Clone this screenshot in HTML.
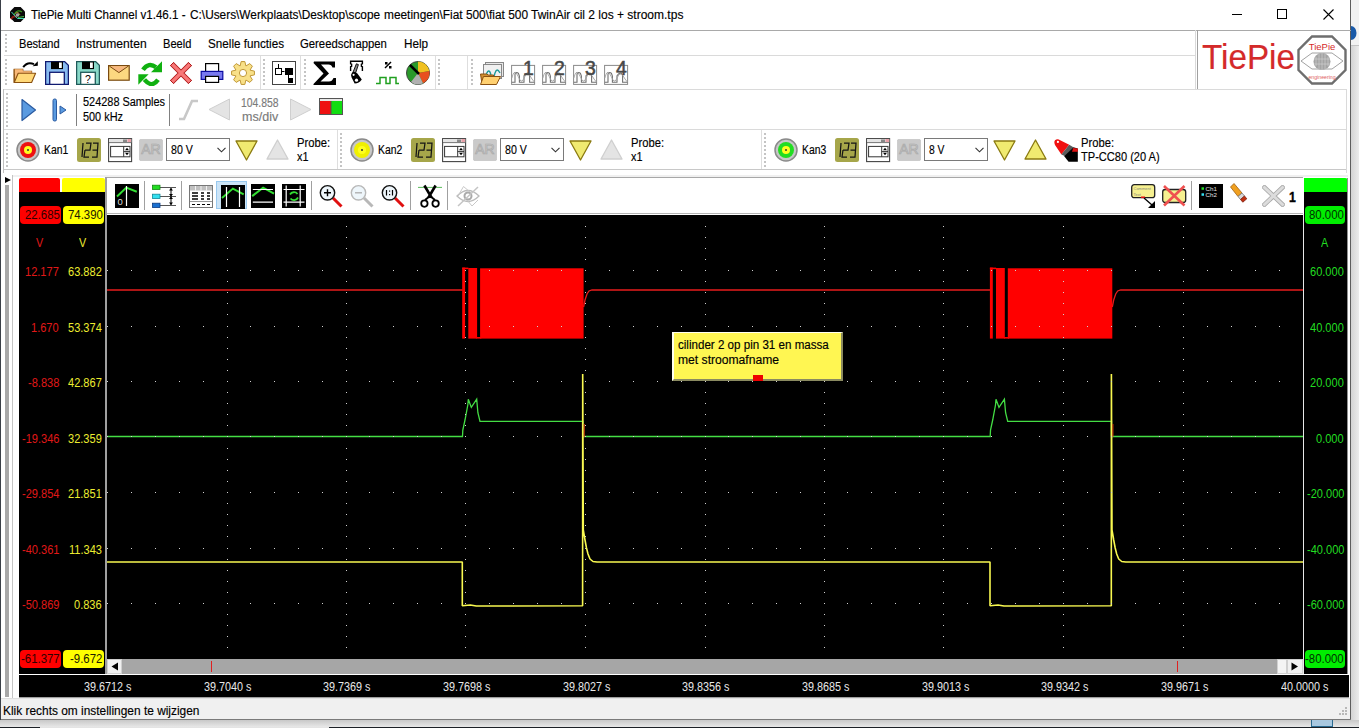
<!DOCTYPE html><html><head><meta charset="utf-8"><style>
html,body{margin:0;padding:0;}
body{width:1359px;height:728px;position:relative;overflow:hidden;background:#e6e6e6;font-family:"Liberation Sans",sans-serif;}
.t{position:absolute;white-space:nowrap;line-height:1;-webkit-text-stroke:0.15px currentColor;}
.r{position:absolute;display:block;}
</style></head><body>
<div class="r" style="left:0px;top:0px;width:1351px;height:720px;background:#ffffff;"></div>
<div class="r" style="left:1351px;top:0px;width:8px;height:728px;background:linear-gradient(90deg,#d4d4d4,#ececec);"></div>
<div class="r" style="left:1351px;top:0px;width:8px;height:45px;background:#f2f2f2;"></div>
<div class="r" style="left:1351px;top:45px;width:8px;height:1px;background:#c4c4c4;"></div>
<div class="r" style="left:0px;top:720px;width:1359px;height:8px;background:linear-gradient(180deg,#c8c8c8,#ececec);"></div>
<div class="r" style="left:0px;top:727px;width:1359px;height:1px;background:#1c2026;"></div>
<div class="r" style="left:40px;top:727px;width:289px;height:1px;background:#e4e4e4;"></div>
<div class="r" style="left:1311px;top:719px;width:22px;height:8px;background:#a8c8e0;box-sizing:border-box;border:1px solid #2a6a90;border-top:0;"></div>
<div class="r" style="left:0px;top:0px;width:1px;height:720px;background:#3a3f47;"></div>
<div class="r" style="left:1350px;top:0px;width:1px;height:720px;background:#5e5e5e;"></div>
<svg class="r" style="left:9.5px;top:6.5px;" width="15" height="15" viewBox="0 0 15 15"><path d="M4.4 0h6.2l4.4 4.4v6.2l-4.4 4.4h-6.2l-4.4-4.4v-6.2z" fill="#0a0a0a"/><path d="M4 8Q7 1.5 12 5" stroke="#3a9a20" stroke-width="1.2" fill="none"/><path d="M5.5 6.5Q8 4 10 8" stroke="#c8a030" stroke-width="0.9" fill="none"/><path d="M1 12Q4 8 7 10" stroke="#8a1a10" stroke-width="2" fill="none"/><path d="M1.5 5L7.5 11.5L14 11.5" stroke="#40d8b8" stroke-width="1" fill="none"/><path d="M8 10.5L14 9.5" stroke="#40c040" stroke-width="1" fill="none"/><circle cx="7.5" cy="8" r="1.8" fill="#a0a0a0"/></svg>
<div class="r" style="left:1232px;top:14px;width:10px;height:1px;background:#000;"></div>
<svg class="r" style="left:1277px;top:9px;" width="10" height="10" viewBox="0 0 10 10"><rect x="0.5" y="0.5" width="9" height="9" fill="none" stroke="#000" stroke-width="1"/></svg>
<svg class="r" style="left:1323px;top:9px;" width="11" height="11" viewBox="0 0 11 11"><path d="M0.5 0.5L10.5 10.5M10.5 0.5L0.5 10.5" stroke="#000" stroke-width="1.1"/></svg>
<svg class="r" style="left:1351px;top:25px;" width="8" height="16" viewBox="0 0 8 16"><ellipse cx="0" cy="8" rx="5.5" ry="7" fill="#1a5aa8"/></svg>
<div class="t" style="left:30.50px;top:9.24px;font-size:12px;color:#000;transform:scaleX(0.9637);transform-origin:left top;">TiePie Multi Channel v1.46.1 -</div>
<div class="t" style="left:189.90px;top:9.24px;font-size:12px;color:#000;transform:scaleX(0.9873);transform-origin:left top;">C:\Users\Werkplaats\Desktop\scope</div>
<div class="t" style="left:384.00px;top:9.24px;font-size:12px;color:#000;transform:scaleX(0.9901);transform-origin:left top;">meetingen\Fiat 500\fiat 500</div>
<div class="t" style="left:531.00px;top:9.24px;font-size:12px;color:#000;">TwinAir cil 2 los + stroom.tps</div>
<div class="r" style="left:1px;top:30px;width:1350px;height:1px;background:#a9a9a9;"></div>
<div class="r" style="left:3px;top:89px;width:1px;height:84px;background:#c0c0c0;"></div>
<div class="r" style="left:4px;top:55px;width:1191px;height:1px;background:#dadada;"></div>
<div class="r" style="left:4px;top:89px;width:1342px;height:1px;background:#dadada;"></div>
<div class="r" style="left:4px;top:129px;width:1342px;height:1px;background:#dadada;"></div>
<div class="r" style="left:4px;top:169px;width:1342px;height:1px;background:#c8c8c8;"></div>
<div class="r" style="left:1195px;top:30px;width:1px;height:59px;background:#dadada;"></div>
<div class="r" style="left:1197px;top:30px;width:1px;height:59px;background:#a0a0a0;"></div>
<div class="r" style="left:1346px;top:89px;width:1px;height:84px;background:#dadada;"></div>
<svg class="r" style="left:0;top:0" width="1351" height="54"><path d="M5 34h2v2h-2zM5 38h2v2h-2zM5 42h2v2h-2zM5 46h2v2h-2zM5 50h2v2h-2z" fill="#c4c4c4"/></svg>
<svg class="r" style="left:0;top:0" width="1351" height="88"><path d="M5 59h2v2h-2zM5 63h2v2h-2zM5 67h2v2h-2zM5 71h2v2h-2zM5 75h2v2h-2zM5 79h2v2h-2zM5 83h2v2h-2z" fill="#c4c4c4"/></svg>
<svg class="r" style="left:0;top:0" width="1351" height="88"><path d="M263 59h2v2h-2zM263 63h2v2h-2zM263 67h2v2h-2zM263 71h2v2h-2zM263 75h2v2h-2zM263 79h2v2h-2zM263 83h2v2h-2z" fill="#c4c4c4"/></svg>
<svg class="r" style="left:0;top:0" width="1351" height="88"><path d="M304 59h2v2h-2zM304 63h2v2h-2zM304 67h2v2h-2zM304 71h2v2h-2zM304 75h2v2h-2zM304 79h2v2h-2zM304 83h2v2h-2z" fill="#c4c4c4"/></svg>
<svg class="r" style="left:0;top:0" width="1351" height="88"><path d="M438 59h2v2h-2zM438 63h2v2h-2zM438 67h2v2h-2zM438 71h2v2h-2zM438 75h2v2h-2zM438 79h2v2h-2zM438 83h2v2h-2z" fill="#c4c4c4"/></svg>
<svg class="r" style="left:0;top:0" width="1351" height="88"><path d="M471 59h2v2h-2zM471 63h2v2h-2zM471 67h2v2h-2zM471 71h2v2h-2zM471 75h2v2h-2zM471 79h2v2h-2zM471 83h2v2h-2z" fill="#c4c4c4"/></svg>
<div class="r" style="left:260px;top:56px;width:1px;height:33px;background:#dedede;"></div>
<div class="r" style="left:300px;top:56px;width:1px;height:33px;background:#dedede;"></div>
<div class="r" style="left:435px;top:56px;width:1px;height:33px;background:#dedede;"></div>
<div class="r" style="left:467px;top:56px;width:1px;height:33px;background:#dedede;"></div>
<svg class="r" style="left:0;top:0" width="1351" height="128"><path d="M6 93h2v2h-2zM6 97h2v2h-2zM6 101h2v2h-2zM6 105h2v2h-2zM6 109h2v2h-2zM6 113h2v2h-2zM6 117h2v2h-2zM6 121h2v2h-2zM6 125h2v2h-2z" fill="#c4c4c4"/></svg>
<svg class="r" style="left:0;top:0" width="1351" height="168"><path d="M6 133h2v2h-2zM6 137h2v2h-2zM6 141h2v2h-2zM6 145h2v2h-2zM6 149h2v2h-2zM6 153h2v2h-2zM6 157h2v2h-2zM6 161h2v2h-2zM6 165h2v2h-2z" fill="#c4c4c4"/></svg>
<svg class="r" style="left:0;top:0" width="1351" height="168"><path d="M340 133h2v2h-2zM340 137h2v2h-2zM340 141h2v2h-2zM340 145h2v2h-2zM340 149h2v2h-2zM340 153h2v2h-2zM340 157h2v2h-2zM340 161h2v2h-2zM340 165h2v2h-2z" fill="#c4c4c4"/></svg>
<svg class="r" style="left:0;top:0" width="1351" height="168"><path d="M764 133h2v2h-2zM764 137h2v2h-2zM764 141h2v2h-2zM764 145h2v2h-2zM764 149h2v2h-2zM764 153h2v2h-2zM764 157h2v2h-2zM764 161h2v2h-2zM764 165h2v2h-2z" fill="#c4c4c4"/></svg>
<div class="r" style="left:337px;top:130px;width:1px;height:39px;background:#dedede;"></div>
<div class="r" style="left:761px;top:130px;width:1px;height:39px;background:#dedede;"></div>
<div class="t" style="left:18.50px;top:37.64px;font-size:12px;color:#000;transform:scaleX(0.9242);transform-origin:left top;">Bestand</div>
<div class="t" style="left:76.00px;top:37.64px;font-size:12px;color:#000;transform:scaleX(1.0083);transform-origin:left top;">Instrumenten</div>
<div class="t" style="left:163.20px;top:37.64px;font-size:12px;color:#000;transform:scaleX(0.9245);transform-origin:left top;">Beeld</div>
<div class="t" style="left:208.00px;top:37.64px;font-size:12px;color:#000;transform:scaleX(0.9736);transform-origin:left top;">Snelle functies</div>
<div class="t" style="left:300.40px;top:37.64px;font-size:12px;color:#000;transform:scaleX(0.9435);transform-origin:left top;">Gereedschappen</div>
<div class="t" style="left:404.40px;top:37.64px;font-size:12px;color:#000;transform:scaleX(0.9773);transform-origin:left top;">Help</div>
<svg class="r" style="left:13px;top:60px;" width="26" height="24" viewBox="0 0 26 24"><path d="M10.2 7.2Q14.5 1.2 21 4.2" stroke="#000" stroke-width="2" fill="none"/><path d="M19.6 6.2L24.8 1.3V5.8z" fill="#000"/><path d="M1.2 22.5V9.2H9.8V11.2H18.6V13.2" fill="#f8b878" stroke="#8a5010" stroke-width="1.1"/><path d="M1.2 9.2H9.8V11.2H18.6V14H1.2z" fill="#f8b878"/><path d="M5.2 13.2H22.6L18.6 22.5H1.2z" fill="#ffd878" stroke="#8a5010" stroke-width="1.1" stroke-linejoin="round"/><path d="M1.2 9.2V22.5" stroke="#8a5010" stroke-width="1.1"/></svg>
<svg class="r" style="left:45px;top:61px;" width="24" height="24" viewBox="0 0 24 24"><path d="M0.6 0.6H19.6L23.4 4.4V23.4H0.6z" fill="#88bbf0" stroke="#101a70" stroke-width="1.3"/><rect x="6" y="0.6" width="12" height="7.5" fill="#000"/><rect x="14" y="1.5" width="2.8" height="5.5" fill="#fff"/><rect x="4.7" y="11.3" width="14.6" height="12.1" fill="#fff" stroke="#101a70" stroke-width="1.3"/></svg>
<svg class="r" style="left:76px;top:61px;" width="24" height="24" viewBox="0 0 24 24"><path d="M0.6 0.6H19.6L23.4 4.4V23.4H0.6z" fill="#88d8c8" stroke="#205a5a" stroke-width="1.3"/><rect x="6" y="0.6" width="12" height="7.5" fill="#000"/><rect x="14" y="1.5" width="2.8" height="5.5" fill="#fff"/><rect x="4.7" y="11.3" width="14.6" height="12.1" fill="#fff" stroke="#205a5a" stroke-width="1.3"/><text x="12" y="22" font-size="10.5" font-family="Liberation Sans" text-anchor="middle" fill="#000">?</text></svg>
<svg class="r" style="left:107px;top:64px;" width="24" height="18" viewBox="0 0 24 18"><rect x="1.6" y="1.6" width="20.6" height="14.6" fill="#fcd880" stroke="#7a4a10" stroke-width="1.2"/><path d="M2.8 2.2L12 8.4L21 2.2z" fill="#f8b880"/><path d="M2.5 2.2L11.9 8.6L21.2 2.2" fill="none" stroke="#7a4a10" stroke-width="1"/></svg>
<svg class="r" style="left:138px;top:60px;" width="25" height="26" viewBox="0 0 25 26"><path d="M5 9.8Q10.5 1.8 18 7.2" stroke="#10b010" stroke-width="4.4" fill="none"/><path d="M24 1.3V12.2H13z" fill="#10b010"/><path d="M20 19.8Q14 28.5 6.4 19.6" stroke="#10b010" stroke-width="4.4" fill="none"/><path d="M0.3 14.2V24.8L10.6 14.2z" fill="#10b010"/></svg>
<svg class="r" style="left:169px;top:61px;" width="24" height="24" viewBox="0 0 24 24"><path d="M3 3L21 21M21 3L3 21" stroke="#b01818" stroke-width="5.2" stroke-linecap="butt"/><path d="M3 3L21 21M21 3L3 21" stroke="#f87878" stroke-width="3.2" stroke-linecap="butt"/><path d="M1.2 4.8L4.8 1.2M19.2 1.2L22.8 4.8M1.2 19.2L4.8 22.8M19.2 22.8L22.8 19.2" stroke="#b01818" stroke-width="1"/></svg>
<svg class="r" style="left:200px;top:63px;" width="24" height="21" viewBox="0 0 24 21"><rect x="5.6" y="0.6" width="13" height="8" fill="#fff" stroke="#000" stroke-width="1.2"/><rect x="1.2" y="8.4" width="21.6" height="8" fill="#7878f0" stroke="#0a0aa0" stroke-width="1.2"/><rect x="5.6" y="13.4" width="13" height="6" fill="#fff" stroke="#000" stroke-width="1.2"/></svg>
<svg class="r" style="left:231px;top:61px;" width="24" height="24" viewBox="0 0 24 24"><path d="M10.15 0.55 L13.85 0.55 L14.91 4.98 L18.79 2.60 L21.40 5.21 L19.02 9.09 L23.45 10.15 L23.45 13.85 L19.02 14.91 L21.40 18.79 L18.79 21.40 L14.91 19.02 L13.85 23.45 L10.15 23.45 L9.09 19.02 L5.21 21.40 L2.60 18.79 L4.98 14.91 L0.55 13.85 L0.55 10.15 L4.98 9.09 L2.60 5.21 L5.21 2.60 L9.09 4.98z" fill="#f8e088" stroke="#c09838" stroke-width="1" stroke-linejoin="round"/><circle cx="12" cy="12" r="3.6" fill="#fff" stroke="#c09838" stroke-width="1"/></svg>
<svg class="r" style="left:272px;top:61px;" width="24" height="24" viewBox="0 0 24 24"><rect x="0.5" y="0.5" width="23" height="23" fill="#fff" stroke="#444"/><rect x="3.5" y="7.5" width="6" height="6" fill="#fff" stroke="#000"/><path d="M6.5 3v4M9.5 10.5h3" stroke="#000"/><rect x="13" y="7" width="8" height="7" fill="#000"/><path d="M16.5 14v4" stroke="#000"/><rect x="16" y="17" width="5" height="5" fill="#000"/></svg>
<svg class="r" style="left:313px;top:61px;" width="24" height="24" viewBox="0 0 24 24"><path d="M1 0.5h21v6h-2.5q-1-3-4-3h-7.5l8 9-8.5 8h8.5q3 0 4.5-3.5h2.5v7.5h-22.5v-1.5l10-10.5-10-10.5z" fill="#000"/></svg>
<svg class="r" style="left:349px;top:60px;" width="16" height="26" viewBox="0 0 16 26"><path d="M1.6 11V6.8L2.6 6.4V4.2L1.6 3.8V1.2H13.4V3.8L12.4 4.2V6.4L13.4 6.8V11" fill="none" stroke="#000" stroke-width="1.4"/><path d="M7.4 3.8L9.4 4.6L6.6 13L4 12.2z" fill="#888" stroke="#000" stroke-width="0.9"/><path d="M3.2 12.3Q1.2 15 2.6 17.6L5.6 23.6Q10.2 23.2 12.8 19.4L8.4 13.6Q6.2 11.2 3.2 12.3z" fill="#000"/><circle cx="4.6" cy="14.8" r="1.1" fill="#fff"/><circle cx="7.5" cy="20.2" r="1.6" fill="#fff"/></svg>
<svg class="r" style="left:375px;top:61px;" width="24" height="24" viewBox="0 0 24 24"><path d="M1 22.5h4v-6h6v6h4v-6h6v6h3" stroke="#20a020" stroke-width="1.5" fill="none"/><path d="M10 7l6-6" stroke="#000" stroke-width="1.5"/><rect x="10" y="1" width="2.5" height="2.5" fill="#000"/><rect x="14" y="5" width="2.5" height="2.5" fill="#000"/></svg>
<svg class="r" style="left:406px;top:61px;" width="24" height="24" viewBox="0 0 24 24"><circle cx="12" cy="12" r="11.5" fill="#2a9a2a" stroke="#444" stroke-width="1"/><path d="M12 12L12 0.5A11.5 11.5 0 0 1 23.4 10z" fill="#f0c020"/><path d="M12 12L23.4 10A11.5 11.5 0 0 1 17 22.3z" fill="#e85020"/><path d="M12 12L17 22.3A11.5 11.5 0 0 1 5 21z" fill="#b0b0b0"/><path d="M4 4L13 13" stroke="#000" stroke-width="2.5"/></svg>
<svg class="r" style="left:480px;top:62px;" width="24" height="23" viewBox="0 0 24 23"><rect x="5.5" y="0.5" width="18" height="14" fill="#e8e8e8" stroke="#888"/><rect x="3.5" y="2.5" width="18" height="14" fill="#f0f0f0" stroke="#888"/><path d="M6 13q3-8 5 0q2 6 4-2q2-6 5 0" stroke="#1a9a9a" fill="none" stroke-width="1.3"/><path d="M0.5 12h6l2 1h5v9h-11.5z" fill="#d09030" stroke="#8a5010"/><path d="M0.5 22.5l3-8h17l-4 8z" fill="#ffd070" stroke="#8a5010"/></svg>
<svg class="r" style="left:511px;top:60px;" width="25" height="26" viewBox="0 0 25 26"><rect x="0.6" y="5.4" width="23" height="19" fill="#fff" stroke="#8a8a8a" stroke-width="1"/><path d="M0.8 22.2H4V13.8Q5.5 11.5 7.5 13.5L8.4 16V22.2H13V15.8Q15 12.5 17.5 13.2L18.6 15.5V22.2H23.4" stroke="#707070" stroke-width="1.1" fill="none"/><path d="M0.8 18Q3 10 5.2 13Q7 16 9 20Q11 23 13 18Q15 13 17 14Q19 15 21 19L23.4 22" stroke="#a0a0a0" stroke-width="0.9" fill="none"/><text x="17.5" y="15.3" font-size="19.5" font-family="Liberation Sans" text-anchor="middle" fill="#484848" stroke="#484848" stroke-width="0.5">1</text></svg>
<svg class="r" style="left:542px;top:60px;" width="25" height="26" viewBox="0 0 25 26"><rect x="0.6" y="5.4" width="23" height="19" fill="#fff" stroke="#8a8a8a" stroke-width="1"/><path d="M0.8 22.2H4V13.8Q5.5 11.5 7.5 13.5L8.4 16V22.2H13V15.8Q15 12.5 17.5 13.2L18.6 15.5V22.2H23.4" stroke="#707070" stroke-width="1.1" fill="none"/><path d="M0.8 18Q3 10 5.2 13Q7 16 9 20Q11 23 13 18Q15 13 17 14Q19 15 21 19L23.4 22" stroke="#a0a0a0" stroke-width="0.9" fill="none"/><text x="17.5" y="15.3" font-size="19.5" font-family="Liberation Sans" text-anchor="middle" fill="#484848" stroke="#484848" stroke-width="0.5">2</text></svg>
<svg class="r" style="left:573px;top:60px;" width="25" height="26" viewBox="0 0 25 26"><rect x="0.6" y="5.4" width="23" height="19" fill="#fff" stroke="#8a8a8a" stroke-width="1"/><path d="M0.8 22.2H4V13.8Q5.5 11.5 7.5 13.5L8.4 16V22.2H13V15.8Q15 12.5 17.5 13.2L18.6 15.5V22.2H23.4" stroke="#707070" stroke-width="1.1" fill="none"/><path d="M0.8 18Q3 10 5.2 13Q7 16 9 20Q11 23 13 18Q15 13 17 14Q19 15 21 19L23.4 22" stroke="#a0a0a0" stroke-width="0.9" fill="none"/><text x="17.5" y="15.3" font-size="19.5" font-family="Liberation Sans" text-anchor="middle" fill="#484848" stroke="#484848" stroke-width="0.5">3</text></svg>
<svg class="r" style="left:604px;top:60px;" width="25" height="26" viewBox="0 0 25 26"><rect x="0.6" y="5.4" width="23" height="19" fill="#fff" stroke="#8a8a8a" stroke-width="1"/><path d="M0.8 22.2H4V13.8Q5.5 11.5 7.5 13.5L8.4 16V22.2H13V15.8Q15 12.5 17.5 13.2L18.6 15.5V22.2H23.4" stroke="#707070" stroke-width="1.1" fill="none"/><path d="M0.8 18Q3 10 5.2 13Q7 16 9 20Q11 23 13 18Q15 13 17 14Q19 15 21 19L23.4 22" stroke="#a0a0a0" stroke-width="0.9" fill="none"/><text x="17.5" y="15.3" font-size="19.5" font-family="Liberation Sans" text-anchor="middle" fill="#484848" stroke="#484848" stroke-width="0.5">4</text></svg>
<div class="t" style="left:1202.00px;top:39.17px;font-size:35px;color:#d42a2a;transform:scaleX(0.9490);transform-origin:left top;">TiePie</div>
<svg class="r" style="left:1297px;top:35px;" width="50" height="50" viewBox="0 0 50 50"><path d="M15 1.5h20l13.5 13.5v20l-13.5 13.5h-20l-13.5-13.5v-20z" fill="#fff" stroke="#6e6e6e" stroke-width="2.4"/><path d="M4 26L15 18H35L46 26L35 34H15z" fill="none" stroke="#8a8a8a" stroke-width="0.8"/><circle cx="25" cy="26.5" r="8.5" fill="#a4a4a4"/><path d="M19 22v9M22 19v15M25 18v17M28 19v15M31 22v9M17 24h16M17 29h16" stroke="#d0d0d0" stroke-width="0.7"/><text x="25" y="15" font-size="9.5" font-family="Liberation Sans" text-anchor="middle" fill="#d42a2a">TiePie</text><text x="25" y="43.5" font-size="5.2" font-family="Liberation Sans" text-anchor="middle" fill="#e06060">engineering</text></svg>
<svg class="r" style="left:21px;top:98px;" width="16" height="24" viewBox="0 0 16 24"><path d="M1 1.5L14.5 12L1 22.5z" fill="#5a9ae0" stroke="#2a5aa0" stroke-width="1.2" stroke-linejoin="round"/></svg>
<svg class="r" style="left:52px;top:98px;" width="16" height="24" viewBox="0 0 16 24"><rect x="1" y="1" width="3.5" height="22" rx="1.5" fill="#5a9ae0" stroke="#2a5aa0" stroke-width="1"/><path d="M8 8L14 12L8 16z" fill="#5a9ae0" stroke="#2a5aa0" stroke-width="1"/></svg>
<div class="r" style="left:76px;top:94px;width:1px;height:32px;background:#808080;"></div>
<div class="r" style="left:169px;top:94px;width:1px;height:32px;background:#808080;"></div>
<div class="t" style="left:82.80px;top:96.04px;font-size:12px;color:#000;transform:scaleX(0.9105);transform-origin:left top;">524288 Samples</div>
<div class="t" style="left:82.80px;top:111.04px;font-size:12px;color:#000;transform:scaleX(0.9083);transform-origin:left top;">500 kHz</div>
<svg class="r" style="left:178px;top:98px;" width="22" height="24" viewBox="0 0 22 24"><path d="M1 21h5l8-18h6" stroke="#c8c8c8" stroke-width="2.6" fill="none"/></svg>
<svg class="r" style="left:208px;top:98px;" width="23" height="23" viewBox="0 0 23 23"><path d="M1 11.5L21.5 1v21z" fill="#e4e4e4" stroke="#cfcfcf" stroke-width="1"/></svg>
<div class="t" style="left:241.00px;top:96.64px;font-size:12px;color:#7a7a7a;transform:scaleX(0.8668);transform-origin:left top;">104.858</div>
<div class="t" style="left:241.50px;top:110.84px;font-size:12px;color:#7a7a7a;transform:scaleX(1.0438);transform-origin:left top;">ms/div</div>
<svg class="r" style="left:289px;top:98px;" width="23" height="23" viewBox="0 0 23 23"><path d="M1.5 1L22 11.5L1.5 22z" fill="#e4e4e4" stroke="#cfcfcf" stroke-width="1"/></svg>
<svg class="r" style="left:319px;top:98px;" width="25" height="17" viewBox="0 0 25 17"><rect x="0.5" y="0.5" width="23" height="16" fill="#e8e8e8" stroke="#555"/><rect x="1" y="3" width="11" height="13" fill="#ee1111"/><rect x="12" y="3" width="11" height="13" fill="#11dd11"/><path d="M12 3v13" stroke="#555"/></svg>
<svg class="r" style="left:16px;top:138px;" width="24" height="24" viewBox="0 0 24 24"><circle cx="12" cy="12" r="11" fill="#c8c8c8" stroke="#8a8a8a" stroke-width="1.5"/><circle cx="12" cy="12" r="8" fill="#ee1111"/><circle cx="12" cy="12" r="4" fill="#ffff20" /><circle cx="12" cy="12" r="1" fill="#333"/></svg>
<div class="t" style="left:43.70px;top:143.64px;font-size:12px;color:#000;transform:scaleX(0.8672);transform-origin:left top;">Kan1</div>
<svg class="r" style="left:77px;top:138px;" width="24" height="24" viewBox="0 0 24 24"><rect x="0" y="0" width="24" height="24" rx="2.5" fill="#a6a64a"/><g stroke="#151515" stroke-width="1.25" fill="none"><path d="M6 5L5 19"/><path d="M9 5h5l-1 7h-5M8 12L7 19h5"/><path d="M16 5h5l-1 14h-5M15.5 12h5"/></g></svg>
<svg class="r" style="left:108px;top:138px;" width="25" height="25" viewBox="0 0 25 25"><rect x="0.6" y="0.6" width="23" height="23" fill="#fff" stroke="#444" stroke-width="1.1"/><rect x="1" y="1" width="22.3" height="3.6" fill="#e4e4e4"/><path d="M1 4.6h22.3" stroke="#555" stroke-width="0.8"/><rect x="15" y="1.5" width="4" height="2.5" fill="#888"/><rect x="19.5" y="1" width="3.5" height="3" fill="#e8a0a8"/><rect x="2.6" y="8.4" width="19.4" height="10.4" fill="#fff" stroke="#333" stroke-width="1"/><path d="M15.7 8.4v10.4M15.7 13.6h6.3" stroke="#333" stroke-width="1"/><path d="M17 12.3h4l-2-2.5z M17 14.8h4l-2 2.5z" fill="#000"/></svg>
<svg class="r" style="left:139px;top:139px;" width="24" height="22" viewBox="0 0 24 22"><rect x="0.3" y="0.3" width="23.4" height="21.4" rx="1.8" fill="#cacaca" stroke="#c0c0c0" stroke-width="0.6"/><text x="12" y="15" font-size="14" font-family="Liberation Sans" text-anchor="middle" fill="#d0d0d0" stroke="#a8a8a8" stroke-width="0.7">AR</text></svg>
<div class="r" style="left:166px;top:138px;width:64px;height:23px;background:#fff;box-sizing:border-box;border:1px solid #7a7a7a;"></div>
<div class="t" style="left:171.30px;top:143.64px;font-size:12px;color:#000;transform:scaleX(0.8840);transform-origin:left top;">80 V</div>
<svg class="r" style="left:217px;top:146.5px;" width="9" height="6" viewBox="0 0 9 6"><path d="M0.5 0.8L4.5 4.8L8.5 0.8" stroke="#333" stroke-width="1.1" fill="none"/></svg>
<svg class="r" style="left:235px;top:140px;" width="23" height="21" viewBox="0 0 23 21"><path d="M1 1H22L11.5 20z" fill="#f0ea70" stroke="#8a7a10" stroke-width="1.3" stroke-linejoin="round"/></svg>
<svg class="r" style="left:266px;top:139px;" width="23" height="21" viewBox="0 0 23 21"><path d="M1 20H22L11.5 1z" fill="#e4e4e4" stroke="#cfcfcf" stroke-width="1.3" stroke-linejoin="round"/></svg>
<div class="t" style="left:297.20px;top:136.54px;font-size:12px;color:#000;transform:scaleX(0.9338);transform-origin:left top;">Probe:</div>
<div class="t" style="left:297.20px;top:151.14px;font-size:12px;color:#000;transform:scaleX(0.9084);transform-origin:left top;">x1</div>
<svg class="r" style="left:350px;top:138px;" width="24" height="24" viewBox="0 0 24 24"><circle cx="12" cy="12" r="11" fill="#c8c8c8" stroke="#8a8a8a" stroke-width="1.5"/><circle cx="12" cy="12" r="8" fill="#f0f000"/><circle cx="12" cy="12" r="4" fill="#ffff20" /><circle cx="12" cy="12" r="1" fill="#333"/></svg>
<div class="t" style="left:377.70px;top:143.64px;font-size:12px;color:#000;transform:scaleX(0.8672);transform-origin:left top;">Kan2</div>
<svg class="r" style="left:411px;top:138px;" width="24" height="24" viewBox="0 0 24 24"><rect x="0" y="0" width="24" height="24" rx="2.5" fill="#a6a64a"/><g stroke="#151515" stroke-width="1.25" fill="none"><path d="M6 5L5 19"/><path d="M9 5h5l-1 7h-5M8 12L7 19h5"/><path d="M16 5h5l-1 14h-5M15.5 12h5"/></g></svg>
<svg class="r" style="left:442px;top:138px;" width="25" height="25" viewBox="0 0 25 25"><rect x="0.6" y="0.6" width="23" height="23" fill="#fff" stroke="#444" stroke-width="1.1"/><rect x="1" y="1" width="22.3" height="3.6" fill="#e4e4e4"/><path d="M1 4.6h22.3" stroke="#555" stroke-width="0.8"/><rect x="15" y="1.5" width="4" height="2.5" fill="#888"/><rect x="19.5" y="1" width="3.5" height="3" fill="#e8a0a8"/><rect x="2.6" y="8.4" width="19.4" height="10.4" fill="#fff" stroke="#333" stroke-width="1"/><path d="M15.7 8.4v10.4M15.7 13.6h6.3" stroke="#333" stroke-width="1"/><path d="M17 12.3h4l-2-2.5z M17 14.8h4l-2 2.5z" fill="#000"/></svg>
<svg class="r" style="left:473px;top:139px;" width="24" height="22" viewBox="0 0 24 22"><rect x="0.3" y="0.3" width="23.4" height="21.4" rx="1.8" fill="#cacaca" stroke="#c0c0c0" stroke-width="0.6"/><text x="12" y="15" font-size="14" font-family="Liberation Sans" text-anchor="middle" fill="#d0d0d0" stroke="#a8a8a8" stroke-width="0.7">AR</text></svg>
<div class="r" style="left:500px;top:138px;width:64px;height:23px;background:#fff;box-sizing:border-box;border:1px solid #7a7a7a;"></div>
<div class="t" style="left:505.30px;top:143.64px;font-size:12px;color:#000;transform:scaleX(0.8840);transform-origin:left top;">80 V</div>
<svg class="r" style="left:551px;top:146.5px;" width="9" height="6" viewBox="0 0 9 6"><path d="M0.5 0.8L4.5 4.8L8.5 0.8" stroke="#333" stroke-width="1.1" fill="none"/></svg>
<svg class="r" style="left:569px;top:140px;" width="23" height="21" viewBox="0 0 23 21"><path d="M1 1H22L11.5 20z" fill="#f0ea70" stroke="#8a7a10" stroke-width="1.3" stroke-linejoin="round"/></svg>
<svg class="r" style="left:600px;top:139px;" width="23" height="21" viewBox="0 0 23 21"><path d="M1 20H22L11.5 1z" fill="#e4e4e4" stroke="#cfcfcf" stroke-width="1.3" stroke-linejoin="round"/></svg>
<div class="t" style="left:631.20px;top:136.54px;font-size:12px;color:#000;transform:scaleX(0.9338);transform-origin:left top;">Probe:</div>
<div class="t" style="left:631.20px;top:151.14px;font-size:12px;color:#000;transform:scaleX(0.9084);transform-origin:left top;">x1</div>
<svg class="r" style="left:774px;top:138px;" width="24" height="24" viewBox="0 0 24 24"><circle cx="12" cy="12" r="11" fill="#c8c8c8" stroke="#8a8a8a" stroke-width="1.5"/><circle cx="12" cy="12" r="8" fill="#22dd22"/><circle cx="12" cy="12" r="4" fill="#ffff20" /><circle cx="12" cy="12" r="1" fill="#333"/></svg>
<div class="t" style="left:801.60px;top:143.64px;font-size:12px;color:#000;transform:scaleX(0.8672);transform-origin:left top;">Kan3</div>
<svg class="r" style="left:835px;top:138px;" width="24" height="24" viewBox="0 0 24 24"><rect x="0" y="0" width="24" height="24" rx="2.5" fill="#a6a64a"/><g stroke="#151515" stroke-width="1.25" fill="none"><path d="M6 5L5 19"/><path d="M9 5h5l-1 7h-5M8 12L7 19h5"/><path d="M16 5h5l-1 14h-5M15.5 12h5"/></g></svg>
<svg class="r" style="left:866px;top:138px;" width="25" height="25" viewBox="0 0 25 25"><rect x="0.6" y="0.6" width="23" height="23" fill="#fff" stroke="#444" stroke-width="1.1"/><rect x="1" y="1" width="22.3" height="3.6" fill="#e4e4e4"/><path d="M1 4.6h22.3" stroke="#555" stroke-width="0.8"/><rect x="15" y="1.5" width="4" height="2.5" fill="#888"/><rect x="19.5" y="1" width="3.5" height="3" fill="#e8a0a8"/><rect x="2.6" y="8.4" width="19.4" height="10.4" fill="#fff" stroke="#333" stroke-width="1"/><path d="M15.7 8.4v10.4M15.7 13.6h6.3" stroke="#333" stroke-width="1"/><path d="M17 12.3h4l-2-2.5z M17 14.8h4l-2 2.5z" fill="#000"/></svg>
<svg class="r" style="left:897px;top:139px;" width="24" height="22" viewBox="0 0 24 22"><rect x="0.3" y="0.3" width="23.4" height="21.4" rx="1.8" fill="#cacaca" stroke="#c0c0c0" stroke-width="0.6"/><text x="12" y="15" font-size="14" font-family="Liberation Sans" text-anchor="middle" fill="#d0d0d0" stroke="#a8a8a8" stroke-width="0.7">AR</text></svg>
<div class="r" style="left:924px;top:138px;width:64px;height:23px;background:#fff;box-sizing:border-box;border:1px solid #7a7a7a;"></div>
<div class="t" style="left:929.30px;top:143.64px;font-size:12px;color:#000;transform:scaleX(0.8611);transform-origin:left top;">8 V</div>
<svg class="r" style="left:975px;top:146.5px;" width="9" height="6" viewBox="0 0 9 6"><path d="M0.5 0.8L4.5 4.8L8.5 0.8" stroke="#333" stroke-width="1.1" fill="none"/></svg>
<svg class="r" style="left:993px;top:140px;" width="23" height="21" viewBox="0 0 23 21"><path d="M1 1H22L11.5 20z" fill="#f0ea70" stroke="#8a7a10" stroke-width="1.3" stroke-linejoin="round"/></svg>
<svg class="r" style="left:1024px;top:139px;" width="23" height="21" viewBox="0 0 23 21"><path d="M1 20H22L11.5 1z" fill="#f0ea70" stroke="#8a7a10" stroke-width="1.3" stroke-linejoin="round"/></svg>
<svg class="r" style="left:1053px;top:138px;" width="26" height="25" viewBox="0 0 26 25"><path d="M2 7Q0.2 3 3.2 1.6Q5 0.8 7.2 2.2L16.2 6.8L8.4 16.6z" fill="#f01010"/><circle cx="4.9" cy="3.9" r="1.1" fill="#fff"/><path d="M16.2 6.8L20.4 9.3L12.6 18.6L8.4 16.6z" fill="#5a5a5a"/><path d="M20.4 9.3L24.8 10.4V23.7H15.6L11.2 18.2z" fill="#000"/><path d="M20.2 10L24.8 10.5V13.8H19z" fill="#e01010"/></svg>
<div class="t" style="left:1081.30px;top:136.54px;font-size:12px;color:#000;transform:scaleX(0.9338);transform-origin:left top;">Probe:</div>
<div class="t" style="left:1081.30px;top:151.14px;font-size:12px;color:#000;transform:scaleX(0.9218);transform-origin:left top;">TP-CC80 (20 A)</div>
<div class="r" style="left:1px;top:173px;width:1349px;height:525px;background:#ffffff;"></div>
<div class="r" style="left:13px;top:175px;width:1335px;height:2px;background:#f0f0f0;"></div>
<svg class="r" style="left:4px;top:176px;" width="8" height="8" viewBox="0 0 8 8"><path d="M1 1L7 4L1 7z" fill="#000"/></svg>
<div class="r" style="left:5px;top:185px;width:4px;height:512px;background:#a8a8a8;"></div>
<div class="r" style="left:12px;top:175px;width:1px;height:523px;background:#c4c4c4;"></div>
<div class="r" style="left:19px;top:178px;width:41px;height:14px;background:#ff0000;border-radius:2px 2px 0 0;"></div>
<div class="r" style="left:62px;top:178px;width:43px;height:14px;background:#ffff00;border-radius:2px 2px 0 0;"></div>
<div class="r" style="left:1304px;top:178px;width:44px;height:14px;background:#00ff00;border-radius:0 3px 0 0;"></div>
<div class="r" style="left:19px;top:192px;width:86px;height:482px;background:#000;"></div>
<div class="r" style="left:105px;top:177px;width:2px;height:498px;background:#a0a0a0;"></div>
<div class="r" style="left:1304px;top:192px;width:43px;height:482px;background:#000;"></div>
<div class="r" style="left:1347px;top:178px;width:1px;height:497px;background:#909090;"></div>
<div class="r" style="left:1348px;top:178px;width:2px;height:520px;background:#ffffff;"></div>
<div class="r" style="left:107px;top:177px;width:1196px;height:37px;background:#ffffff;"></div>
<div class="r" style="left:107px;top:177px;width:1196px;height:1px;background:#a8a8a8;"></div>
<div class="r" style="left:107px;top:213px;width:1196px;height:1px;background:#b4b4b4;"></div>
<div class="r" style="left:107px;top:215px;width:1196px;height:444px;background:#000;"></div>
<div class="r" style="left:1303px;top:214px;width:1px;height:460px;background:#e8e8e8;"></div>
<div class="r" style="left:107px;top:659px;width:1196px;height:15px;background:#a6a6a6;"></div>
<div class="r" style="left:107px;top:659px;width:15px;height:15px;background:#f0f0f0;box-sizing:border-box;border:1px solid #d0d0d0;"></div>
<svg class="r" style="left:110px;top:662px;" width="10" height="9" viewBox="0 0 10 9"><path d="M8 0.5L1.5 4.5L8 8.5z" fill="#000"/></svg>
<div class="r" style="left:1277px;top:659px;width:10px;height:15px;background:#f4f4f4;box-sizing:border-box;border:1px solid #d0d0d0;"></div>
<div class="r" style="left:1287px;top:659px;width:16px;height:15px;background:#f0f0f0;box-sizing:border-box;border:1px solid #d0d0d0;"></div>
<svg class="r" style="left:1290px;top:662px;" width="10" height="9" viewBox="0 0 10 9"><path d="M1.5 0.5L8 4.5L1.5 8.5z" fill="#000"/></svg>
<div class="r" style="left:211px;top:661px;width:1px;height:11px;background:#e02020;"></div>
<div class="r" style="left:1177px;top:661px;width:1px;height:11px;background:#e02020;"></div>
<div class="r" style="left:19px;top:674px;width:1330px;height:1px;background:#ffffff;"></div>
<div class="r" style="left:19px;top:675px;width:1330px;height:22px;background:#000;"></div>
<div class="r" style="left:19px;top:697px;width:1330px;height:1px;background:#a0a0a0;"></div>
<svg class="r" style="left:107px;top:214px;" width="1196" height="445" viewBox="0 0 1196 445"><polyline points="0.0,222.5 355.5,222.5 355.8,216.0 358.0,206.0 360.8,191.0 361.3,185.2 364.3,193.4 369.7,185.2 370.9,198.7 373.0,207.3 475.8,207.3 475.8,222.5 883.2,222.5 883.5,216.0 885.7,206.0 888.5,191.0 889.0,185.2 892.0,193.4 897.4,185.2 898.6,198.7 900.7,207.3 1004.5,207.3 1004.5,222.5 1196.0,222.5" fill="none" stroke="#44dd44" stroke-width="1.3"/><path d="M0.0 76.0 L355.8 76.0M476.6 93.0 L478.0 86.0 L480.0 80.0 L482.0 77.0 L485.0 76.0 L883.5 76.0M1005.3 93.0 L1006.7 86.0 L1008.7 80.0 L1010.7 77.0 L1013.7 76.0 L1196.0 76.0" fill="none" stroke="#e81c1c" stroke-width="1.3"/><rect x="355.2" y="53.60000000000002" width="2.9" height="71" fill="#ff0000"/><rect x="355.2" y="53.60000000000002" width="6.2" height="1.6" fill="#ff0000"/><rect x="361.3" y="54" width="8.8" height="70.6" fill="#ff0000"/><rect x="369.3" y="123" width="5" height="1.6" fill="#ff0000"/><rect x="373.1" y="54.30000000000001" width="103.5" height="70.3" fill="#ff0000"/><rect x="882.9" y="53.60000000000002" width="2.9" height="71" fill="#ff0000"/><rect x="882.9" y="53.60000000000002" width="6.2" height="1.6" fill="#ff0000"/><rect x="889.0" y="54" width="8.8" height="70.6" fill="#ff0000"/><rect x="897.0" y="123" width="5" height="1.6" fill="#ff0000"/><rect x="900.8" y="54.30000000000001" width="104.5" height="70.3" fill="#ff0000"/><polyline points="0.0,348.0 355.3,348.0 355.3,391.8 363.3,391.0 369.3,392.0 475.6,391.8 475.7,160.0 476.3,316.0 478.0,326.0 479.5,334.0 481.0,340.0 483.0,345.0 486.0,347.5 490.0,348.0 883.0,348.0 883.0,391.8 891.0,391.0 897.0,392.0 1004.3,391.8 1004.4,160.0 1005.0,316.0 1006.7,326.0 1008.2,334.0 1009.7,340.0 1011.7,345.0 1014.7,347.5 1018.7,348.0 1196.0,348.0" fill="none" stroke="#f8f850" stroke-width="1.6" stroke-linejoin="bevel"/><rect x="476.7" y="210" width="1" height="13" fill="#e04010"/><rect x="1005.4" y="210" width="1" height="13" fill="#e04010"/><path d="M0 56h1v1h-1zM24 56h1v1h-1zM48 56h1v1h-1zM72 56h1v1h-1zM96 56h1v1h-1zM120 56h1v1h-1zM143 56h1v1h-1zM167 56h1v1h-1zM191 56h1v1h-1zM215 56h1v1h-1zM239 56h1v1h-1zM262 56h1v1h-1zM286 56h1v1h-1zM310 56h1v1h-1zM334 56h1v1h-1zM358 56h1v1h-1zM382 56h1v1h-1zM406 56h1v1h-1zM430 56h1v1h-1zM454 56h1v1h-1zM478 56h1v1h-1zM502 56h1v1h-1zM526 56h1v1h-1zM550 56h1v1h-1zM574 56h1v1h-1zM598 56h1v1h-1zM621 56h1v1h-1zM645 56h1v1h-1zM669 56h1v1h-1zM693 56h1v1h-1zM717 56h1v1h-1zM740 56h1v1h-1zM764 56h1v1h-1zM788 56h1v1h-1zM812 56h1v1h-1zM836 56h1v1h-1zM860 56h1v1h-1zM884 56h1v1h-1zM908 56h1v1h-1zM932 56h1v1h-1zM956 56h1v1h-1zM980 56h1v1h-1zM1004 56h1v1h-1zM1028 56h1v1h-1zM1052 56h1v1h-1zM1076 56h1v1h-1zM1100 56h1v1h-1zM1124 56h1v1h-1zM1148 56h1v1h-1zM1172 56h1v1h-1zM0 112h1v1h-1zM24 112h1v1h-1zM48 112h1v1h-1zM72 112h1v1h-1zM96 112h1v1h-1zM120 112h1v1h-1zM143 112h1v1h-1zM167 112h1v1h-1zM191 112h1v1h-1zM215 112h1v1h-1zM239 112h1v1h-1zM262 112h1v1h-1zM286 112h1v1h-1zM310 112h1v1h-1zM334 112h1v1h-1zM358 112h1v1h-1zM382 112h1v1h-1zM406 112h1v1h-1zM430 112h1v1h-1zM454 112h1v1h-1zM478 112h1v1h-1zM502 112h1v1h-1zM526 112h1v1h-1zM550 112h1v1h-1zM574 112h1v1h-1zM598 112h1v1h-1zM621 112h1v1h-1zM645 112h1v1h-1zM669 112h1v1h-1zM693 112h1v1h-1zM717 112h1v1h-1zM740 112h1v1h-1zM764 112h1v1h-1zM788 112h1v1h-1zM812 112h1v1h-1zM836 112h1v1h-1zM860 112h1v1h-1zM884 112h1v1h-1zM908 112h1v1h-1zM932 112h1v1h-1zM956 112h1v1h-1zM980 112h1v1h-1zM1004 112h1v1h-1zM1028 112h1v1h-1zM1052 112h1v1h-1zM1076 112h1v1h-1zM1100 112h1v1h-1zM1124 112h1v1h-1zM1148 112h1v1h-1zM1172 112h1v1h-1zM0 167h1v1h-1zM24 167h1v1h-1zM48 167h1v1h-1zM72 167h1v1h-1zM96 167h1v1h-1zM120 167h1v1h-1zM143 167h1v1h-1zM167 167h1v1h-1zM191 167h1v1h-1zM215 167h1v1h-1zM239 167h1v1h-1zM262 167h1v1h-1zM286 167h1v1h-1zM310 167h1v1h-1zM334 167h1v1h-1zM358 167h1v1h-1zM382 167h1v1h-1zM406 167h1v1h-1zM430 167h1v1h-1zM454 167h1v1h-1zM478 167h1v1h-1zM502 167h1v1h-1zM526 167h1v1h-1zM550 167h1v1h-1zM574 167h1v1h-1zM598 167h1v1h-1zM621 167h1v1h-1zM645 167h1v1h-1zM669 167h1v1h-1zM693 167h1v1h-1zM717 167h1v1h-1zM740 167h1v1h-1zM764 167h1v1h-1zM788 167h1v1h-1zM812 167h1v1h-1zM836 167h1v1h-1zM860 167h1v1h-1zM884 167h1v1h-1zM908 167h1v1h-1zM932 167h1v1h-1zM956 167h1v1h-1zM980 167h1v1h-1zM1004 167h1v1h-1zM1028 167h1v1h-1zM1052 167h1v1h-1zM1076 167h1v1h-1zM1100 167h1v1h-1zM1124 167h1v1h-1zM1148 167h1v1h-1zM1172 167h1v1h-1zM0 222h1v1h-1zM24 222h1v1h-1zM48 222h1v1h-1zM72 222h1v1h-1zM96 222h1v1h-1zM120 222h1v1h-1zM143 222h1v1h-1zM167 222h1v1h-1zM191 222h1v1h-1zM215 222h1v1h-1zM239 222h1v1h-1zM262 222h1v1h-1zM286 222h1v1h-1zM310 222h1v1h-1zM334 222h1v1h-1zM358 222h1v1h-1zM382 222h1v1h-1zM406 222h1v1h-1zM430 222h1v1h-1zM454 222h1v1h-1zM478 222h1v1h-1zM502 222h1v1h-1zM526 222h1v1h-1zM550 222h1v1h-1zM574 222h1v1h-1zM598 222h1v1h-1zM621 222h1v1h-1zM645 222h1v1h-1zM669 222h1v1h-1zM693 222h1v1h-1zM717 222h1v1h-1zM740 222h1v1h-1zM764 222h1v1h-1zM788 222h1v1h-1zM812 222h1v1h-1zM836 222h1v1h-1zM860 222h1v1h-1zM884 222h1v1h-1zM908 222h1v1h-1zM932 222h1v1h-1zM956 222h1v1h-1zM980 222h1v1h-1zM1004 222h1v1h-1zM1028 222h1v1h-1zM1052 222h1v1h-1zM1076 222h1v1h-1zM1100 222h1v1h-1zM1124 222h1v1h-1zM1148 222h1v1h-1zM1172 222h1v1h-1zM0 278h1v1h-1zM24 278h1v1h-1zM48 278h1v1h-1zM72 278h1v1h-1zM96 278h1v1h-1zM120 278h1v1h-1zM143 278h1v1h-1zM167 278h1v1h-1zM191 278h1v1h-1zM215 278h1v1h-1zM239 278h1v1h-1zM262 278h1v1h-1zM286 278h1v1h-1zM310 278h1v1h-1zM334 278h1v1h-1zM358 278h1v1h-1zM382 278h1v1h-1zM406 278h1v1h-1zM430 278h1v1h-1zM454 278h1v1h-1zM478 278h1v1h-1zM502 278h1v1h-1zM526 278h1v1h-1zM550 278h1v1h-1zM574 278h1v1h-1zM598 278h1v1h-1zM621 278h1v1h-1zM645 278h1v1h-1zM669 278h1v1h-1zM693 278h1v1h-1zM717 278h1v1h-1zM740 278h1v1h-1zM764 278h1v1h-1zM788 278h1v1h-1zM812 278h1v1h-1zM836 278h1v1h-1zM860 278h1v1h-1zM884 278h1v1h-1zM908 278h1v1h-1zM932 278h1v1h-1zM956 278h1v1h-1zM980 278h1v1h-1zM1004 278h1v1h-1zM1028 278h1v1h-1zM1052 278h1v1h-1zM1076 278h1v1h-1zM1100 278h1v1h-1zM1124 278h1v1h-1zM1148 278h1v1h-1zM1172 278h1v1h-1zM0 334h1v1h-1zM24 334h1v1h-1zM48 334h1v1h-1zM72 334h1v1h-1zM96 334h1v1h-1zM120 334h1v1h-1zM143 334h1v1h-1zM167 334h1v1h-1zM191 334h1v1h-1zM215 334h1v1h-1zM239 334h1v1h-1zM262 334h1v1h-1zM286 334h1v1h-1zM310 334h1v1h-1zM334 334h1v1h-1zM358 334h1v1h-1zM382 334h1v1h-1zM406 334h1v1h-1zM430 334h1v1h-1zM454 334h1v1h-1zM478 334h1v1h-1zM502 334h1v1h-1zM526 334h1v1h-1zM550 334h1v1h-1zM574 334h1v1h-1zM598 334h1v1h-1zM621 334h1v1h-1zM645 334h1v1h-1zM669 334h1v1h-1zM693 334h1v1h-1zM717 334h1v1h-1zM740 334h1v1h-1zM764 334h1v1h-1zM788 334h1v1h-1zM812 334h1v1h-1zM836 334h1v1h-1zM860 334h1v1h-1zM884 334h1v1h-1zM908 334h1v1h-1zM932 334h1v1h-1zM956 334h1v1h-1zM980 334h1v1h-1zM1004 334h1v1h-1zM1028 334h1v1h-1zM1052 334h1v1h-1zM1076 334h1v1h-1zM1100 334h1v1h-1zM1124 334h1v1h-1zM1148 334h1v1h-1zM1172 334h1v1h-1zM0 389h1v1h-1zM24 389h1v1h-1zM48 389h1v1h-1zM72 389h1v1h-1zM96 389h1v1h-1zM120 389h1v1h-1zM143 389h1v1h-1zM167 389h1v1h-1zM191 389h1v1h-1zM215 389h1v1h-1zM239 389h1v1h-1zM262 389h1v1h-1zM286 389h1v1h-1zM310 389h1v1h-1zM334 389h1v1h-1zM358 389h1v1h-1zM382 389h1v1h-1zM406 389h1v1h-1zM430 389h1v1h-1zM454 389h1v1h-1zM478 389h1v1h-1zM502 389h1v1h-1zM526 389h1v1h-1zM550 389h1v1h-1zM574 389h1v1h-1zM598 389h1v1h-1zM621 389h1v1h-1zM645 389h1v1h-1zM669 389h1v1h-1zM693 389h1v1h-1zM717 389h1v1h-1zM740 389h1v1h-1zM764 389h1v1h-1zM788 389h1v1h-1zM812 389h1v1h-1zM836 389h1v1h-1zM860 389h1v1h-1zM884 389h1v1h-1zM908 389h1v1h-1zM932 389h1v1h-1zM956 389h1v1h-1zM980 389h1v1h-1zM1004 389h1v1h-1zM1028 389h1v1h-1zM1052 389h1v1h-1zM1076 389h1v1h-1zM1100 389h1v1h-1zM1124 389h1v1h-1zM1148 389h1v1h-1zM1172 389h1v1h-1zM120 12h1v1h-1zM120 23h1v1h-1zM120 34h1v1h-1zM120 45h1v1h-1zM120 67h1v1h-1zM120 78h1v1h-1zM120 89h1v1h-1zM120 100h1v1h-1zM120 123h1v1h-1zM120 134h1v1h-1zM120 145h1v1h-1zM120 156h1v1h-1zM120 178h1v1h-1zM120 189h1v1h-1zM120 200h1v1h-1zM120 211h1v1h-1zM120 234h1v1h-1zM120 245h1v1h-1zM120 256h1v1h-1zM120 267h1v1h-1zM120 289h1v1h-1zM120 300h1v1h-1zM120 311h1v1h-1zM120 322h1v1h-1zM120 345h1v1h-1zM120 356h1v1h-1zM120 367h1v1h-1zM120 378h1v1h-1zM120 400h1v1h-1zM120 411h1v1h-1zM120 422h1v1h-1zM120 433h1v1h-1zM239 12h1v1h-1zM239 23h1v1h-1zM239 34h1v1h-1zM239 45h1v1h-1zM239 67h1v1h-1zM239 78h1v1h-1zM239 89h1v1h-1zM239 100h1v1h-1zM239 123h1v1h-1zM239 134h1v1h-1zM239 145h1v1h-1zM239 156h1v1h-1zM239 178h1v1h-1zM239 189h1v1h-1zM239 200h1v1h-1zM239 211h1v1h-1zM239 234h1v1h-1zM239 245h1v1h-1zM239 256h1v1h-1zM239 267h1v1h-1zM239 289h1v1h-1zM239 300h1v1h-1zM239 311h1v1h-1zM239 322h1v1h-1zM239 345h1v1h-1zM239 356h1v1h-1zM239 367h1v1h-1zM239 378h1v1h-1zM239 400h1v1h-1zM239 411h1v1h-1zM239 422h1v1h-1zM239 433h1v1h-1zM358 12h1v1h-1zM358 23h1v1h-1zM358 34h1v1h-1zM358 45h1v1h-1zM358 67h1v1h-1zM358 78h1v1h-1zM358 89h1v1h-1zM358 100h1v1h-1zM358 123h1v1h-1zM358 134h1v1h-1zM358 145h1v1h-1zM358 156h1v1h-1zM358 178h1v1h-1zM358 189h1v1h-1zM358 200h1v1h-1zM358 211h1v1h-1zM358 234h1v1h-1zM358 245h1v1h-1zM358 256h1v1h-1zM358 267h1v1h-1zM358 289h1v1h-1zM358 300h1v1h-1zM358 311h1v1h-1zM358 322h1v1h-1zM358 345h1v1h-1zM358 356h1v1h-1zM358 367h1v1h-1zM358 378h1v1h-1zM358 400h1v1h-1zM358 411h1v1h-1zM358 422h1v1h-1zM358 433h1v1h-1zM478 12h1v1h-1zM478 23h1v1h-1zM478 34h1v1h-1zM478 45h1v1h-1zM478 67h1v1h-1zM478 78h1v1h-1zM478 89h1v1h-1zM478 100h1v1h-1zM478 123h1v1h-1zM478 134h1v1h-1zM478 145h1v1h-1zM478 156h1v1h-1zM478 178h1v1h-1zM478 189h1v1h-1zM478 200h1v1h-1zM478 211h1v1h-1zM478 234h1v1h-1zM478 245h1v1h-1zM478 256h1v1h-1zM478 267h1v1h-1zM478 289h1v1h-1zM478 300h1v1h-1zM478 311h1v1h-1zM478 322h1v1h-1zM478 345h1v1h-1zM478 356h1v1h-1zM478 367h1v1h-1zM478 378h1v1h-1zM478 400h1v1h-1zM478 411h1v1h-1zM478 422h1v1h-1zM478 433h1v1h-1zM598 12h1v1h-1zM598 23h1v1h-1zM598 34h1v1h-1zM598 45h1v1h-1zM598 67h1v1h-1zM598 78h1v1h-1zM598 89h1v1h-1zM598 100h1v1h-1zM598 123h1v1h-1zM598 134h1v1h-1zM598 145h1v1h-1zM598 156h1v1h-1zM598 178h1v1h-1zM598 189h1v1h-1zM598 200h1v1h-1zM598 211h1v1h-1zM598 234h1v1h-1zM598 245h1v1h-1zM598 256h1v1h-1zM598 267h1v1h-1zM598 289h1v1h-1zM598 300h1v1h-1zM598 311h1v1h-1zM598 322h1v1h-1zM598 345h1v1h-1zM598 356h1v1h-1zM598 367h1v1h-1zM598 378h1v1h-1zM598 400h1v1h-1zM598 411h1v1h-1zM598 422h1v1h-1zM598 433h1v1h-1zM717 12h1v1h-1zM717 23h1v1h-1zM717 34h1v1h-1zM717 45h1v1h-1zM717 67h1v1h-1zM717 78h1v1h-1zM717 89h1v1h-1zM717 100h1v1h-1zM717 123h1v1h-1zM717 134h1v1h-1zM717 145h1v1h-1zM717 156h1v1h-1zM717 178h1v1h-1zM717 189h1v1h-1zM717 200h1v1h-1zM717 211h1v1h-1zM717 234h1v1h-1zM717 245h1v1h-1zM717 256h1v1h-1zM717 267h1v1h-1zM717 289h1v1h-1zM717 300h1v1h-1zM717 311h1v1h-1zM717 322h1v1h-1zM717 345h1v1h-1zM717 356h1v1h-1zM717 367h1v1h-1zM717 378h1v1h-1zM717 400h1v1h-1zM717 411h1v1h-1zM717 422h1v1h-1zM717 433h1v1h-1zM836 12h1v1h-1zM836 23h1v1h-1zM836 34h1v1h-1zM836 45h1v1h-1zM836 67h1v1h-1zM836 78h1v1h-1zM836 89h1v1h-1zM836 100h1v1h-1zM836 123h1v1h-1zM836 134h1v1h-1zM836 145h1v1h-1zM836 156h1v1h-1zM836 178h1v1h-1zM836 189h1v1h-1zM836 200h1v1h-1zM836 211h1v1h-1zM836 234h1v1h-1zM836 245h1v1h-1zM836 256h1v1h-1zM836 267h1v1h-1zM836 289h1v1h-1zM836 300h1v1h-1zM836 311h1v1h-1zM836 322h1v1h-1zM836 345h1v1h-1zM836 356h1v1h-1zM836 367h1v1h-1zM836 378h1v1h-1zM836 400h1v1h-1zM836 411h1v1h-1zM836 422h1v1h-1zM836 433h1v1h-1zM956 12h1v1h-1zM956 23h1v1h-1zM956 34h1v1h-1zM956 45h1v1h-1zM956 67h1v1h-1zM956 78h1v1h-1zM956 89h1v1h-1zM956 100h1v1h-1zM956 123h1v1h-1zM956 134h1v1h-1zM956 145h1v1h-1zM956 156h1v1h-1zM956 178h1v1h-1zM956 189h1v1h-1zM956 200h1v1h-1zM956 211h1v1h-1zM956 234h1v1h-1zM956 245h1v1h-1zM956 256h1v1h-1zM956 267h1v1h-1zM956 289h1v1h-1zM956 300h1v1h-1zM956 311h1v1h-1zM956 322h1v1h-1zM956 345h1v1h-1zM956 356h1v1h-1zM956 367h1v1h-1zM956 378h1v1h-1zM956 400h1v1h-1zM956 411h1v1h-1zM956 422h1v1h-1zM956 433h1v1h-1zM1076 12h1v1h-1zM1076 23h1v1h-1zM1076 34h1v1h-1zM1076 45h1v1h-1zM1076 67h1v1h-1zM1076 78h1v1h-1zM1076 89h1v1h-1zM1076 100h1v1h-1zM1076 123h1v1h-1zM1076 134h1v1h-1zM1076 145h1v1h-1zM1076 156h1v1h-1zM1076 178h1v1h-1zM1076 189h1v1h-1zM1076 200h1v1h-1zM1076 211h1v1h-1zM1076 234h1v1h-1zM1076 245h1v1h-1zM1076 256h1v1h-1zM1076 267h1v1h-1zM1076 289h1v1h-1zM1076 300h1v1h-1zM1076 311h1v1h-1zM1076 322h1v1h-1zM1076 345h1v1h-1zM1076 356h1v1h-1zM1076 367h1v1h-1zM1076 378h1v1h-1zM1076 400h1v1h-1zM1076 411h1v1h-1zM1076 422h1v1h-1zM1076 433h1v1h-1z" fill="#d0d0d0"/></svg>
<div class="t" style="left:25.32px;top:266.44px;font-size:12px;color:#e01818;transform:scaleX(0.9200);transform-origin:left top;-webkit-text-stroke:0;">12.177</div>
<div class="t" style="left:68.12px;top:266.44px;font-size:12px;color:#ecec30;transform:scaleX(0.9200);transform-origin:left top;-webkit-text-stroke:0;">63.882</div>
<div class="t" style="left:1310.22px;top:266.44px;font-size:12px;color:#22dd22;transform:scaleX(0.9200);transform-origin:left top;-webkit-text-stroke:0;">60.000</div>
<div class="t" style="left:31.44px;top:321.94px;font-size:12px;color:#e01818;transform:scaleX(0.9200);transform-origin:left top;-webkit-text-stroke:0;">1.670</div>
<div class="t" style="left:68.12px;top:321.94px;font-size:12px;color:#ecec30;transform:scaleX(0.9200);transform-origin:left top;-webkit-text-stroke:0;">53.374</div>
<div class="t" style="left:1310.22px;top:321.94px;font-size:12px;color:#22dd22;transform:scaleX(0.9200);transform-origin:left top;-webkit-text-stroke:0;">40.000</div>
<div class="t" style="left:27.80px;top:377.44px;font-size:12px;color:#e01818;transform:scaleX(0.9200);transform-origin:left top;-webkit-text-stroke:0;">-8.838</div>
<div class="t" style="left:68.12px;top:377.44px;font-size:12px;color:#ecec30;transform:scaleX(0.9200);transform-origin:left top;-webkit-text-stroke:0;">42.867</div>
<div class="t" style="left:1310.22px;top:377.44px;font-size:12px;color:#22dd22;transform:scaleX(0.9200);transform-origin:left top;-webkit-text-stroke:0;">20.000</div>
<div class="t" style="left:21.67px;top:432.94px;font-size:12px;color:#e01818;transform:scaleX(0.9200);transform-origin:left top;-webkit-text-stroke:0;">-19.346</div>
<div class="t" style="left:68.12px;top:432.94px;font-size:12px;color:#ecec30;transform:scaleX(0.9200);transform-origin:left top;-webkit-text-stroke:0;">32.359</div>
<div class="t" style="left:1316.34px;top:432.94px;font-size:12px;color:#22dd22;transform:scaleX(0.9200);transform-origin:left top;-webkit-text-stroke:0;">0.000</div>
<div class="t" style="left:21.67px;top:488.44px;font-size:12px;color:#e01818;transform:scaleX(0.9200);transform-origin:left top;-webkit-text-stroke:0;">-29.854</div>
<div class="t" style="left:68.12px;top:488.44px;font-size:12px;color:#ecec30;transform:scaleX(0.9200);transform-origin:left top;-webkit-text-stroke:0;">21.851</div>
<div class="t" style="left:1306.57px;top:488.44px;font-size:12px;color:#22dd22;transform:scaleX(0.9200);transform-origin:left top;-webkit-text-stroke:0;">-20.000</div>
<div class="t" style="left:21.67px;top:543.94px;font-size:12px;color:#e01818;transform:scaleX(0.9200);transform-origin:left top;-webkit-text-stroke:0;">-40.361</div>
<div class="t" style="left:68.95px;top:543.94px;font-size:12px;color:#ecec30;transform:scaleX(0.9200);transform-origin:left top;-webkit-text-stroke:0;">11.343</div>
<div class="t" style="left:1306.57px;top:543.94px;font-size:12px;color:#22dd22;transform:scaleX(0.9200);transform-origin:left top;-webkit-text-stroke:0;">-40.000</div>
<div class="t" style="left:21.67px;top:599.44px;font-size:12px;color:#e01818;transform:scaleX(0.9200);transform-origin:left top;-webkit-text-stroke:0;">-50.869</div>
<div class="t" style="left:74.24px;top:599.44px;font-size:12px;color:#ecec30;transform:scaleX(0.9200);transform-origin:left top;-webkit-text-stroke:0;">0.836</div>
<div class="t" style="left:1306.57px;top:599.44px;font-size:12px;color:#22dd22;transform:scaleX(0.9200);transform-origin:left top;-webkit-text-stroke:0;">-60.000</div>
<div class="t" style="left:35.91px;top:236.84px;font-size:12px;color:#e01818;transform:scaleX(0.9000);transform-origin:left top;-webkit-text-stroke:0;">V</div>
<div class="t" style="left:79.41px;top:236.84px;font-size:12px;color:#ecec30;transform:scaleX(0.9000);transform-origin:left top;-webkit-text-stroke:0;">V</div>
<div class="t" style="left:1321.38px;top:236.84px;font-size:12px;color:#22dd22;transform:scaleX(0.9000);transform-origin:left top;-webkit-text-stroke:0;">A</div>
<div class="r" style="left:20px;top:206px;width:41px;height:18px;background:#ff0000;border-radius:4px;"></div>
<div class="t" style="left:24.62px;top:209.14px;font-size:12px;color:#300000;transform:scaleX(0.9500);transform-origin:left top;-webkit-text-stroke:0;">22.685</div>
<div class="r" style="left:63px;top:206px;width:41px;height:18px;background:#ffff00;border-radius:4px;"></div>
<div class="t" style="left:67.62px;top:209.14px;font-size:12px;color:#202000;transform:scaleX(0.9500);transform-origin:left top;-webkit-text-stroke:0;">74.390</div>
<div class="r" style="left:20px;top:650px;width:41px;height:18px;background:#ff0000;border-radius:4px;"></div>
<div class="t" style="left:20.85px;top:653.14px;font-size:12px;color:#300000;transform:scaleX(0.9500);transform-origin:left top;-webkit-text-stroke:0;">-61.377</div>
<div class="r" style="left:63px;top:650px;width:41px;height:18px;background:#ffff00;border-radius:4px;"></div>
<div class="t" style="left:70.18px;top:653.14px;font-size:12px;color:#202000;transform:scaleX(0.9500);transform-origin:left top;-webkit-text-stroke:0;">-9.672</div>
<div class="r" style="left:1305px;top:206px;width:40px;height:18px;background:#00ee00;border-radius:4px;"></div>
<div class="t" style="left:1308.62px;top:209.14px;font-size:12px;color:#003000;transform:scaleX(0.9500);transform-origin:left top;-webkit-text-stroke:0;">80.000</div>
<div class="r" style="left:1305px;top:650px;width:40px;height:18px;background:#00ee00;border-radius:4px;"></div>
<div class="t" style="left:1304.85px;top:653.14px;font-size:12px;color:#003000;transform:scaleX(0.9500);transform-origin:left top;-webkit-text-stroke:0;">-80.000</div>
<div class="t" style="left:83.87px;top:681.34px;font-size:12px;color:#e8e8e8;transform:scaleX(0.9000);transform-origin:left top;-webkit-text-stroke:0;">39.6712 s</div>
<div class="t" style="left:203.55px;top:681.34px;font-size:12px;color:#e8e8e8;transform:scaleX(0.9000);transform-origin:left top;-webkit-text-stroke:0;">39.7040 s</div>
<div class="t" style="left:323.23px;top:681.34px;font-size:12px;color:#e8e8e8;transform:scaleX(0.9000);transform-origin:left top;-webkit-text-stroke:0;">39.7369 s</div>
<div class="t" style="left:442.91px;top:681.34px;font-size:12px;color:#e8e8e8;transform:scaleX(0.9000);transform-origin:left top;-webkit-text-stroke:0;">39.7698 s</div>
<div class="t" style="left:562.59px;top:681.34px;font-size:12px;color:#e8e8e8;transform:scaleX(0.9000);transform-origin:left top;-webkit-text-stroke:0;">39.8027 s</div>
<div class="t" style="left:682.27px;top:681.34px;font-size:12px;color:#e8e8e8;transform:scaleX(0.9000);transform-origin:left top;-webkit-text-stroke:0;">39.8356 s</div>
<div class="t" style="left:801.95px;top:681.34px;font-size:12px;color:#e8e8e8;transform:scaleX(0.9000);transform-origin:left top;-webkit-text-stroke:0;">39.8685 s</div>
<div class="t" style="left:921.63px;top:681.34px;font-size:12px;color:#e8e8e8;transform:scaleX(0.9000);transform-origin:left top;-webkit-text-stroke:0;">39.9013 s</div>
<div class="t" style="left:1041.31px;top:681.34px;font-size:12px;color:#e8e8e8;transform:scaleX(0.9000);transform-origin:left top;-webkit-text-stroke:0;">39.9342 s</div>
<div class="t" style="left:1160.99px;top:681.34px;font-size:12px;color:#e8e8e8;transform:scaleX(0.9000);transform-origin:left top;-webkit-text-stroke:0;">39.9671 s</div>
<div class="t" style="left:1280.67px;top:681.34px;font-size:12px;color:#e8e8e8;transform:scaleX(0.9000);transform-origin:left top;-webkit-text-stroke:0;">40.0000 s</div>
<div class="r" style="left:672px;top:332px;width:171px;height:49px;background:#fff652;box-sizing:border-box;border-top:1px solid #fffff0;border-left:2px solid #fffff0;border-right:2px solid #8a8a60;border-bottom:2px solid #8a8a60;"></div>
<div class="t" style="left:677.70px;top:338.54px;font-size:12px;color:#000;transform:scaleX(0.9659);transform-origin:left top;">cilinder 2 op pin 31 en massa</div>
<div class="t" style="left:677.70px;top:353.74px;font-size:12px;color:#000;transform:scaleX(1.0098);transform-origin:left top;">met stroomafname</div>
<div class="r" style="left:753px;top:375px;width:10px;height:6px;background:#ee0000;"></div>
<svg class="r" style="left:115px;top:184px;" width="24" height="24" viewBox="0 0 24 24"><rect width="24" height="24" fill="#000"/><path d="M2 12.4L11.3 3.6L21.8 7.8" stroke="#33dd33" stroke-width="2" fill="none"/><path d="M11.5 2v20" stroke="#fff" stroke-width="1.2"/><text x="5.2" y="21" font-size="9.5" font-family="Liberation Sans" text-anchor="middle" fill="#ddd">0</text></svg>
<div class="r" style="left:144px;top:181px;width:1px;height:29px;background:#a0a0a0;"></div>
<svg class="r" style="left:152px;top:184px;" width="25" height="24" viewBox="0 0 25 24"><path d="M8 3.5h16M8 12.5h16M8 21.5h16" stroke="#555" stroke-width="1"/><rect x="0.5" y="1.2" width="7.5" height="4.3" fill="#22dd22" stroke="#118811" stroke-width="0.8"/><rect x="0.5" y="10.2" width="7.5" height="4.3" fill="#33e0f0" stroke="#118899" stroke-width="0.8"/><rect x="0.5" y="19.2" width="7.5" height="4.3" fill="#1a70d0" stroke="#0a3a80" stroke-width="0.8"/><path d="M19 4v17" stroke="#000" stroke-width="1"/><path d="M17 6.5l2-2.5 2 2.5zM17 10l2 2.5 2-2.5zM17 15l2-2.5 2 2.5zM17 18.5l2 2.5 2-2.5z" fill="#000"/></svg>
<div class="r" style="left:181px;top:181px;width:1px;height:29px;background:#a0a0a0;"></div>
<svg class="r" style="left:189px;top:185px;" width="24" height="23" viewBox="0 0 24 23"><rect x="0.5" y="0.5" width="23" height="22" fill="#fff" stroke="#777"/><rect x="1" y="1" width="22" height="4.5" fill="#c0c0c0"/><path d="M6.5 1v4.5M12 1v4.5M17.5 1v4.5" stroke="#fff" stroke-width="0.8"/><g stroke="#000" stroke-width="1.3"><path d="M3 8h6M12 8h3M18 8h3M3 11h6M12 11h3M18 11h3M3 14h6M12 14h3M18 14h3"/></g><path d="M1 16.5h22" stroke="#999"/><path d="M3 19.5h3M8 19.5h3M13 19.5h3M18 19.5h3" stroke="#000" stroke-width="1.2"/></svg>
<div class="r" style="left:216px;top:181px;width:31px;height:28px;background:#cce4f7;box-sizing:border-box;border:1px solid #99c9ef;"></div>
<svg class="r" style="left:221px;top:185px;" width="24" height="24" viewBox="0 0 24 24"><rect width="24" height="24" fill="#000"/><path d="M1 12.9L11.9 3.6L22.7 9.3" stroke="#33dd33" stroke-width="2" fill="none"/><path d="M5.5 2v20M18.5 2v20" stroke="#fff" stroke-width="1.2"/></svg>
<svg class="r" style="left:251px;top:184px;" width="24" height="24" viewBox="0 0 24 24"><rect width="24" height="24" fill="#000"/><path d="M1.2 12.1L12.1 3.6L23 9.7" stroke="#33dd33" stroke-width="2" fill="none"/><path d="M1.8 5.5h20.2M1.8 18.2h20.2" stroke="#fff" stroke-width="1.2"/></svg>
<svg class="r" style="left:282px;top:184px;" width="24" height="24" viewBox="0 0 24 24"><rect width="24" height="24" fill="#000"/><path d="M4.2 1.5v21M18.2 1.5v21M1.5 5.5h21M1.5 18.2h21" stroke="#fff" stroke-width="1.2"/><path d="M8 10.5 A4.5 4.5 0 0 1 15.5 10M16 13.5A4.5 4.5 0 0 1 8.5 14.5" stroke="#33dd33" stroke-width="1.8" fill="none"/></svg>
<div class="r" style="left:311px;top:181px;width:1px;height:29px;background:#a0a0a0;"></div>
<svg class="r" style="left:319.0px;top:183.5px" width="26" height="26" viewBox="-1 -1 26 26"><path d="M13 13L21.5 21.5" stroke="#e01010" stroke-width="3"/><circle cx="7.5" cy="7.8" r="7.2" fill="#eef6fb" stroke="#111" stroke-width="1.4"/><path d="M4 7.8h7M7.5 4.3v7" stroke="#000" stroke-width="1.4"/></svg>
<svg class="r" style="left:350.0px;top:183.5px" width="26" height="26" viewBox="-1 -1 26 26"><path d="M13 13L21.5 21.5" stroke="#b8b8b8" stroke-width="3"/><circle cx="7.5" cy="7.8" r="7.2" fill="#eef6fb" stroke="#b8b8b8" stroke-width="1.4"/><path d="M4 7.8h7" stroke="#aaa" stroke-width="1.3"/></svg>
<svg class="r" style="left:380.9px;top:183.5px" width="26" height="26" viewBox="-1 -1 26 26"><path d="M13 13L21.5 21.5" stroke="#e01010" stroke-width="3"/><circle cx="7.5" cy="7.8" r="7.2" fill="#eef6fb" stroke="#111" stroke-width="1.4"/><path d="M4.5 5v5.5M10.5 5v5.5" stroke="#000" stroke-width="1.2"/><rect x="7" y="5.5" width="1.2" height="1.2" fill="#000"/><rect x="7" y="9" width="1.2" height="1.2" fill="#000"/></svg>
<div class="r" style="left:410px;top:181px;width:1px;height:29px;background:#a0a0a0;"></div>
<svg class="r" style="left:418px;top:184px;" width="25" height="24" viewBox="0 0 25 24"><path d="M0 3.4h24" stroke="#33aa33" stroke-width="1" opacity="0.8"/><path d="M6.4 1.5L13.5 13.5M17.6 1.5L10.5 13.5" stroke="#000" stroke-width="2.6"/><path d="M12 12L7 16M12 12L17 16" stroke="#000" stroke-width="2"/><circle cx="6.4" cy="19.6" r="3.2" fill="none" stroke="#000" stroke-width="1.8"/><circle cx="17.6" cy="19.6" r="3.2" fill="none" stroke="#000" stroke-width="1.8"/></svg>
<div class="r" style="left:447px;top:181px;width:1px;height:29px;background:#a0a0a0;"></div>
<svg class="r" style="left:456px;top:186px;" width="25" height="22" viewBox="0 0 25 22"><path d="M1 10Q12 -1 23 10Q12 21 1 10z" fill="none" stroke="#bbb" stroke-width="1.3"/><circle cx="12" cy="10" r="3.5" fill="none" stroke="#aaa" stroke-width="2"/><path d="M2 20L22 1" stroke="#c4c4c4" stroke-width="1.5"/><path d="M2 10L7.5 0.5L14 6M11 14L16 20L22 14" stroke="#c8c8c8" stroke-width="1" fill="none"/></svg>
<svg class="r" style="left:1131px;top:184px;" width="25" height="25" viewBox="0 0 25 25"><rect x="0.7" y="0.7" width="23" height="13" rx="2.5" fill="#f6f090" stroke="#222" stroke-width="1.3"/><text x="2.5" y="6" font-size="4" font-family="Liberation Sans" fill="#887">Comment</text><text x="2.5" y="11.5" font-size="4" font-family="Liberation Sans" fill="#887">Text</text><rect x="10" y="12.5" width="4" height="1.6" fill="#e01010"/><path d="M13 14L21 21" stroke="#000" stroke-width="1.3"/><path d="M24 17V24H17z" fill="#000"/></svg>
<svg class="r" style="left:1162px;top:185px;" width="25" height="22" viewBox="0 0 25 22"><rect x="0.7" y="4.5" width="23" height="13" rx="2.5" fill="#f6f090" stroke="#222" stroke-width="1.3"/><path d="M2 1L22.5 20.5M22.5 1L2 20.5" stroke="#ef5050" stroke-width="2.6"/></svg>
<div class="r" style="left:1191px;top:181px;width:1px;height:29px;background:#a0a0a0;"></div>
<svg class="r" style="left:1199px;top:184px;" width="24" height="24" viewBox="0 0 24 24"><rect width="24" height="24" fill="#000"/><rect x="2.5" y="3.3" width="2.5" height="2.5" fill="#22dd22"/><rect x="2.5" y="9.3" width="2.5" height="2.5" fill="#33ddee"/><text x="6.5" y="7" font-size="6.2" font-family="Liberation Sans" fill="#e0e0e0">Ch1</text><text x="6.5" y="13" font-size="6.2" font-family="Liberation Sans" fill="#e0e0e0">Ch2</text></svg>
<svg class="r" style="left:1229px;top:183px;" width="19" height="20" viewBox="0 0 19 20"><path d="M1.5 4L5 0.5L13 10L9 13.5z" fill="#f0a020" stroke="#a06010" stroke-width="0.8"/><path d="M9 13.5L13 10L15.5 13L11.5 16.5z" fill="#d8d8d8" stroke="#777" stroke-width="0.8"/><path d="M11.5 16.5L15.5 13L17.8 15.8L13.8 19.2z" fill="#c03010" stroke="#802010" stroke-width="0.8"/></svg>
<svg class="r" style="left:1262px;top:185px;" width="23" height="22" viewBox="0 0 23 22"><path d="M2.5 2.5L20.5 19.5M20.5 2.5L2.5 19.5" stroke="#a8a8a8" stroke-width="4.6" stroke-linecap="square"/><path d="M2.5 2.5L20.5 19.5M20.5 2.5L2.5 19.5" stroke="#dcdcdc" stroke-width="3" stroke-linecap="square"/></svg>
<div class="t" style="left:1288.80px;top:188.68px;font-size:15.5px;color:#000;font-weight:bold;transform:scaleX(0.7905);transform-origin:left top;-webkit-text-stroke:0.4px #000;">1</div>
<div class="r" style="left:1px;top:698px;width:1349px;height:22px;background:#f0f0f0;"></div>
<div class="r" style="left:1px;top:698px;width:1349px;height:1px;background:#e0e0e0;"></div>
<div class="t" style="left:3.30px;top:704.54px;font-size:12px;color:#000;transform:scaleX(0.9918);transform-origin:left top;">Klik rechts om instellingen te wijzigen</div>
<div class="r" style="left:1px;top:719px;width:1350px;height:1px;background:#7a7a7a;"></div>
<svg class="r" style="left:1336px;top:706px;" width="12" height="12" viewBox="0 0 12 12"><path d="M9 1h2v2h-2zM6 4h2v2h-2zM9 4h2v2h-2zM3 7h2v2h-2zM6 7h2v2h-2zM9 7h2v2h-2z" fill="#b8b8b8"/></svg>
</body></html>
